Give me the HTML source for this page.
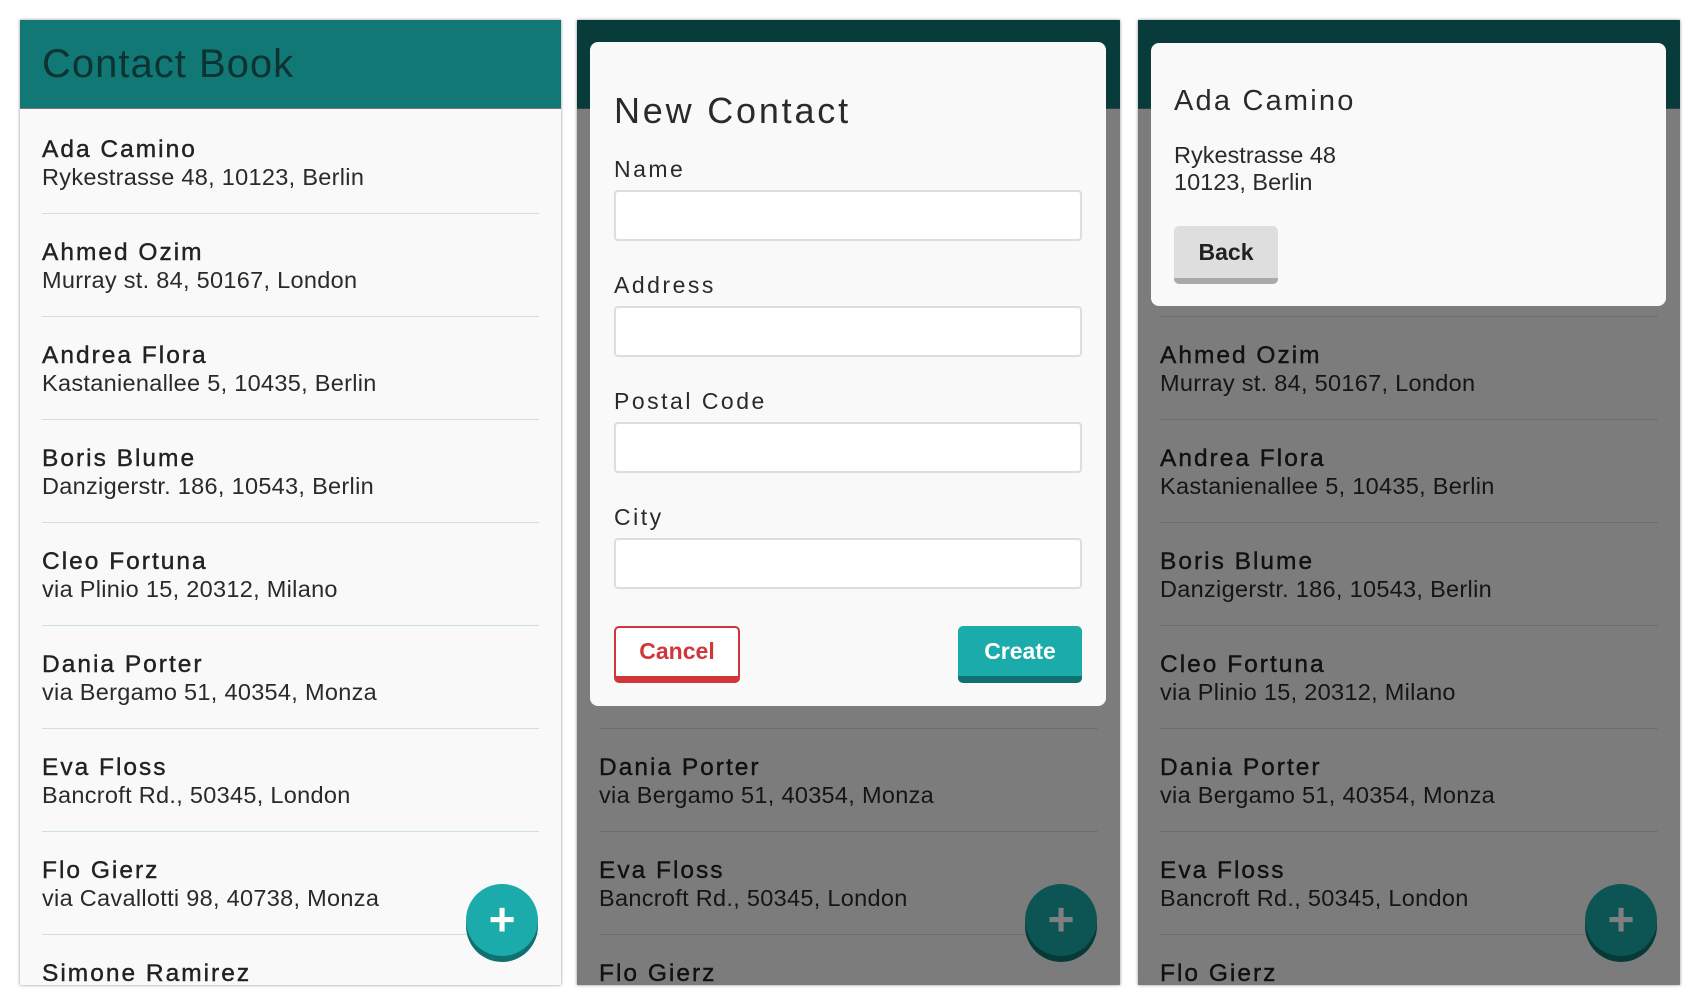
<!DOCTYPE html>
<html><head><meta charset="utf-8"><style>
*{margin:0;padding:0;box-sizing:border-box}
html,body{width:1700px;height:1004px;overflow:hidden}
body{background:#fff;position:relative;font-family:"Liberation Sans",sans-serif;color:#222}
.panel{position:absolute;top:20px;height:965px;background:#f9f9f9;overflow:hidden;box-shadow:0 0 3px rgba(0,0,0,.45)}
.hdr{position:absolute;left:0;top:0;right:0;height:89px;background:#117876;border-bottom:1px solid #777}
.hdr h1{position:absolute;left:22px;top:22px;font-weight:normal;font-size:40px;color:#0b3332;letter-spacing:1px}
.it{position:absolute;left:22px;right:22px;height:103px}
.it .n{position:absolute;left:0;top:2px;font-size:24.5px;letter-spacing:2px;color:#222;-webkit-text-stroke:.4px #222;white-space:nowrap}
.it .a{position:absolute;left:0;top:30px;font-size:23.5px;color:#2a2a2a;white-space:nowrap;letter-spacing:.3px}
.it .s{position:absolute;left:0;right:0;top:79px;height:1px;background:#cde0e0}
.fab{position:absolute;width:72px;height:72px;border-radius:50%;background:#1aabaa;box-shadow:0 6px 0 #0f7270;color:#fff;font-size:46px;font-weight:bold;text-align:center;line-height:70px}
.ov{position:absolute;inset:0;background:rgba(0,0,0,.5)}
.dlg{position:absolute;background:#f9f9f9;border-radius:8px}
.lbl{position:absolute;left:24px;font-size:23px;letter-spacing:2.5px;color:#2a2a2a}
.inp{position:absolute;left:24px;width:468px;height:51px;background:#fff;border:2px solid #ddd;border-radius:4px}
.btn{position:absolute;border-radius:5px;font-weight:bold;font-size:23px;text-align:center}
</style></head><body>

<!-- Panel 1 -->
<div class="panel" style="left:20px;width:541px">
  <div class="hdr"><h1>Contact Book</h1></div>
  <div class="it" style="top:114px"><div class="n">Ada Camino</div><div class="a">Rykestrasse 48, 10123, Berlin</div><div class="s"></div></div>
  <div class="it" style="top:217px"><div class="n">Ahmed Ozim</div><div class="a">Murray st. 84, 50167, London</div><div class="s"></div></div>
  <div class="it" style="top:320px"><div class="n">Andrea Flora</div><div class="a">Kastanienallee 5, 10435, Berlin</div><div class="s"></div></div>
  <div class="it" style="top:423px"><div class="n">Boris Blume</div><div class="a">Danzigerstr. 186, 10543, Berlin</div><div class="s"></div></div>
  <div class="it" style="top:526px"><div class="n">Cleo Fortuna</div><div class="a">via Plinio 15, 20312, Milano</div><div class="s"></div></div>
  <div class="it" style="top:629px"><div class="n">Dania Porter</div><div class="a">via Bergamo 51, 40354, Monza</div><div class="s"></div></div>
  <div class="it" style="top:732px"><div class="n">Eva Floss</div><div class="a">Bancroft Rd., 50345, London</div><div class="s"></div></div>
  <div class="it" style="top:835px"><div class="n">Flo Gierz</div><div class="a">via Cavallotti 98, 40738, Monza</div><div class="s"></div></div>
  <div class="it" style="top:938px;height:27px"><div class="n">Simone Ramirez</div></div>
  <div class="fab" style="left:446px;top:864px">+</div>
</div>

<!-- Panel 2 -->
<div class="panel" style="left:577px;width:543px">
  <div class="hdr"><h1></h1></div>
  <div class="it" style="top:217px"><div class="n">Ada Camino</div><div class="a">Rykestrasse 48, 10123, Berlin</div><div class="s"></div></div>
  <div class="it" style="top:320px"><div class="n">Ahmed Ozim</div><div class="a">Murray st. 84, 50167, London</div><div class="s"></div></div>
  <div class="it" style="top:423px"><div class="n">Andrea Flora</div><div class="a">Kastanienallee 5, 10435, Berlin</div><div class="s"></div></div>
  <div class="it" style="top:526px"><div class="n">Boris Blume</div><div class="a">Danzigerstr. 186, 10543, Berlin</div><div class="s"></div></div>
  <div class="it" style="top:629px"><div class="n">Cleo Fortuna</div><div class="a">via Plinio 15, 20312, Milano</div><div class="s"></div></div>
  <div class="it" style="top:732px"><div class="n">Dania Porter</div><div class="a">via Bergamo 51, 40354, Monza</div><div class="s"></div></div>
  <div class="it" style="top:835px"><div class="n">Eva Floss</div><div class="a">Bancroft Rd., 50345, London</div><div class="s"></div></div>
  <div class="it" style="top:938px;height:27px"><div class="n">Flo Gierz</div></div>
  <div class="fab" style="left:448px;top:864px">+</div>
  <div class="ov"></div>
  <div class="dlg" style="left:13px;top:22px;width:516px;height:664px">
    <div style="position:absolute;left:24px;top:48px;font-size:36px;letter-spacing:2.8px;color:#2a2a2a">New Contact</div>
    <div class="lbl" style="top:114px">Name</div><div class="inp" style="top:148px"></div>
    <div class="lbl" style="top:230px">Address</div><div class="inp" style="top:264px"></div>
    <div class="lbl" style="top:346px">Postal Code</div><div class="inp" style="top:380px"></div>
    <div class="lbl" style="top:462px">City</div><div class="inp" style="top:496px"></div>
    <div class="btn" style="left:24px;top:584px;width:126px;height:57px;background:#fff;border:2px solid #d0363a;border-bottom:7px solid #d0363a;color:#d0363a;line-height:46px">Cancel</div>
    <div class="btn" style="left:368px;top:584px;width:124px;height:57px;background:#1aabaa;border-bottom:7px solid #0f7270;color:#fff;line-height:50px">Create</div>
  </div>
</div>

<!-- Panel 3 -->
<div class="panel" style="left:1138px;width:542px">
  <div class="hdr"><h1></h1></div>
  <div class="it" style="top:217px"><div class="n">Ada Camino</div><div class="a">Rykestrasse 48, 10123, Berlin</div><div class="s"></div></div>
  <div class="it" style="top:320px"><div class="n">Ahmed Ozim</div><div class="a">Murray st. 84, 50167, London</div><div class="s"></div></div>
  <div class="it" style="top:423px"><div class="n">Andrea Flora</div><div class="a">Kastanienallee 5, 10435, Berlin</div><div class="s"></div></div>
  <div class="it" style="top:526px"><div class="n">Boris Blume</div><div class="a">Danzigerstr. 186, 10543, Berlin</div><div class="s"></div></div>
  <div class="it" style="top:629px"><div class="n">Cleo Fortuna</div><div class="a">via Plinio 15, 20312, Milano</div><div class="s"></div></div>
  <div class="it" style="top:732px"><div class="n">Dania Porter</div><div class="a">via Bergamo 51, 40354, Monza</div><div class="s"></div></div>
  <div class="it" style="top:835px"><div class="n">Eva Floss</div><div class="a">Bancroft Rd., 50345, London</div><div class="s"></div></div>
  <div class="it" style="top:938px;height:27px"><div class="n">Flo Gierz</div></div>
  <div class="it" style="top:114px"><div class="s"></div></div>
  <div class="fab" style="left:447px;top:864px">+</div>
  <div class="ov"></div>
  <div class="dlg" style="left:13px;top:23px;width:515px;height:263px">
    <div style="position:absolute;left:23px;top:42px;font-size:29px;letter-spacing:2.2px;color:#2a2a2a">Ada Camino</div>
    <div style="position:absolute;left:23px;top:99px;font-size:23.5px;line-height:27px;color:#2a2a2a">Rykestrasse 48<br>10123, Berlin</div>
    <div class="btn" style="left:23px;top:183px;width:104px;height:58px;background:#dedede;border-bottom:6px solid #aaa;color:#222;line-height:52px">Back</div>
  </div>
</div>
</body></html>
